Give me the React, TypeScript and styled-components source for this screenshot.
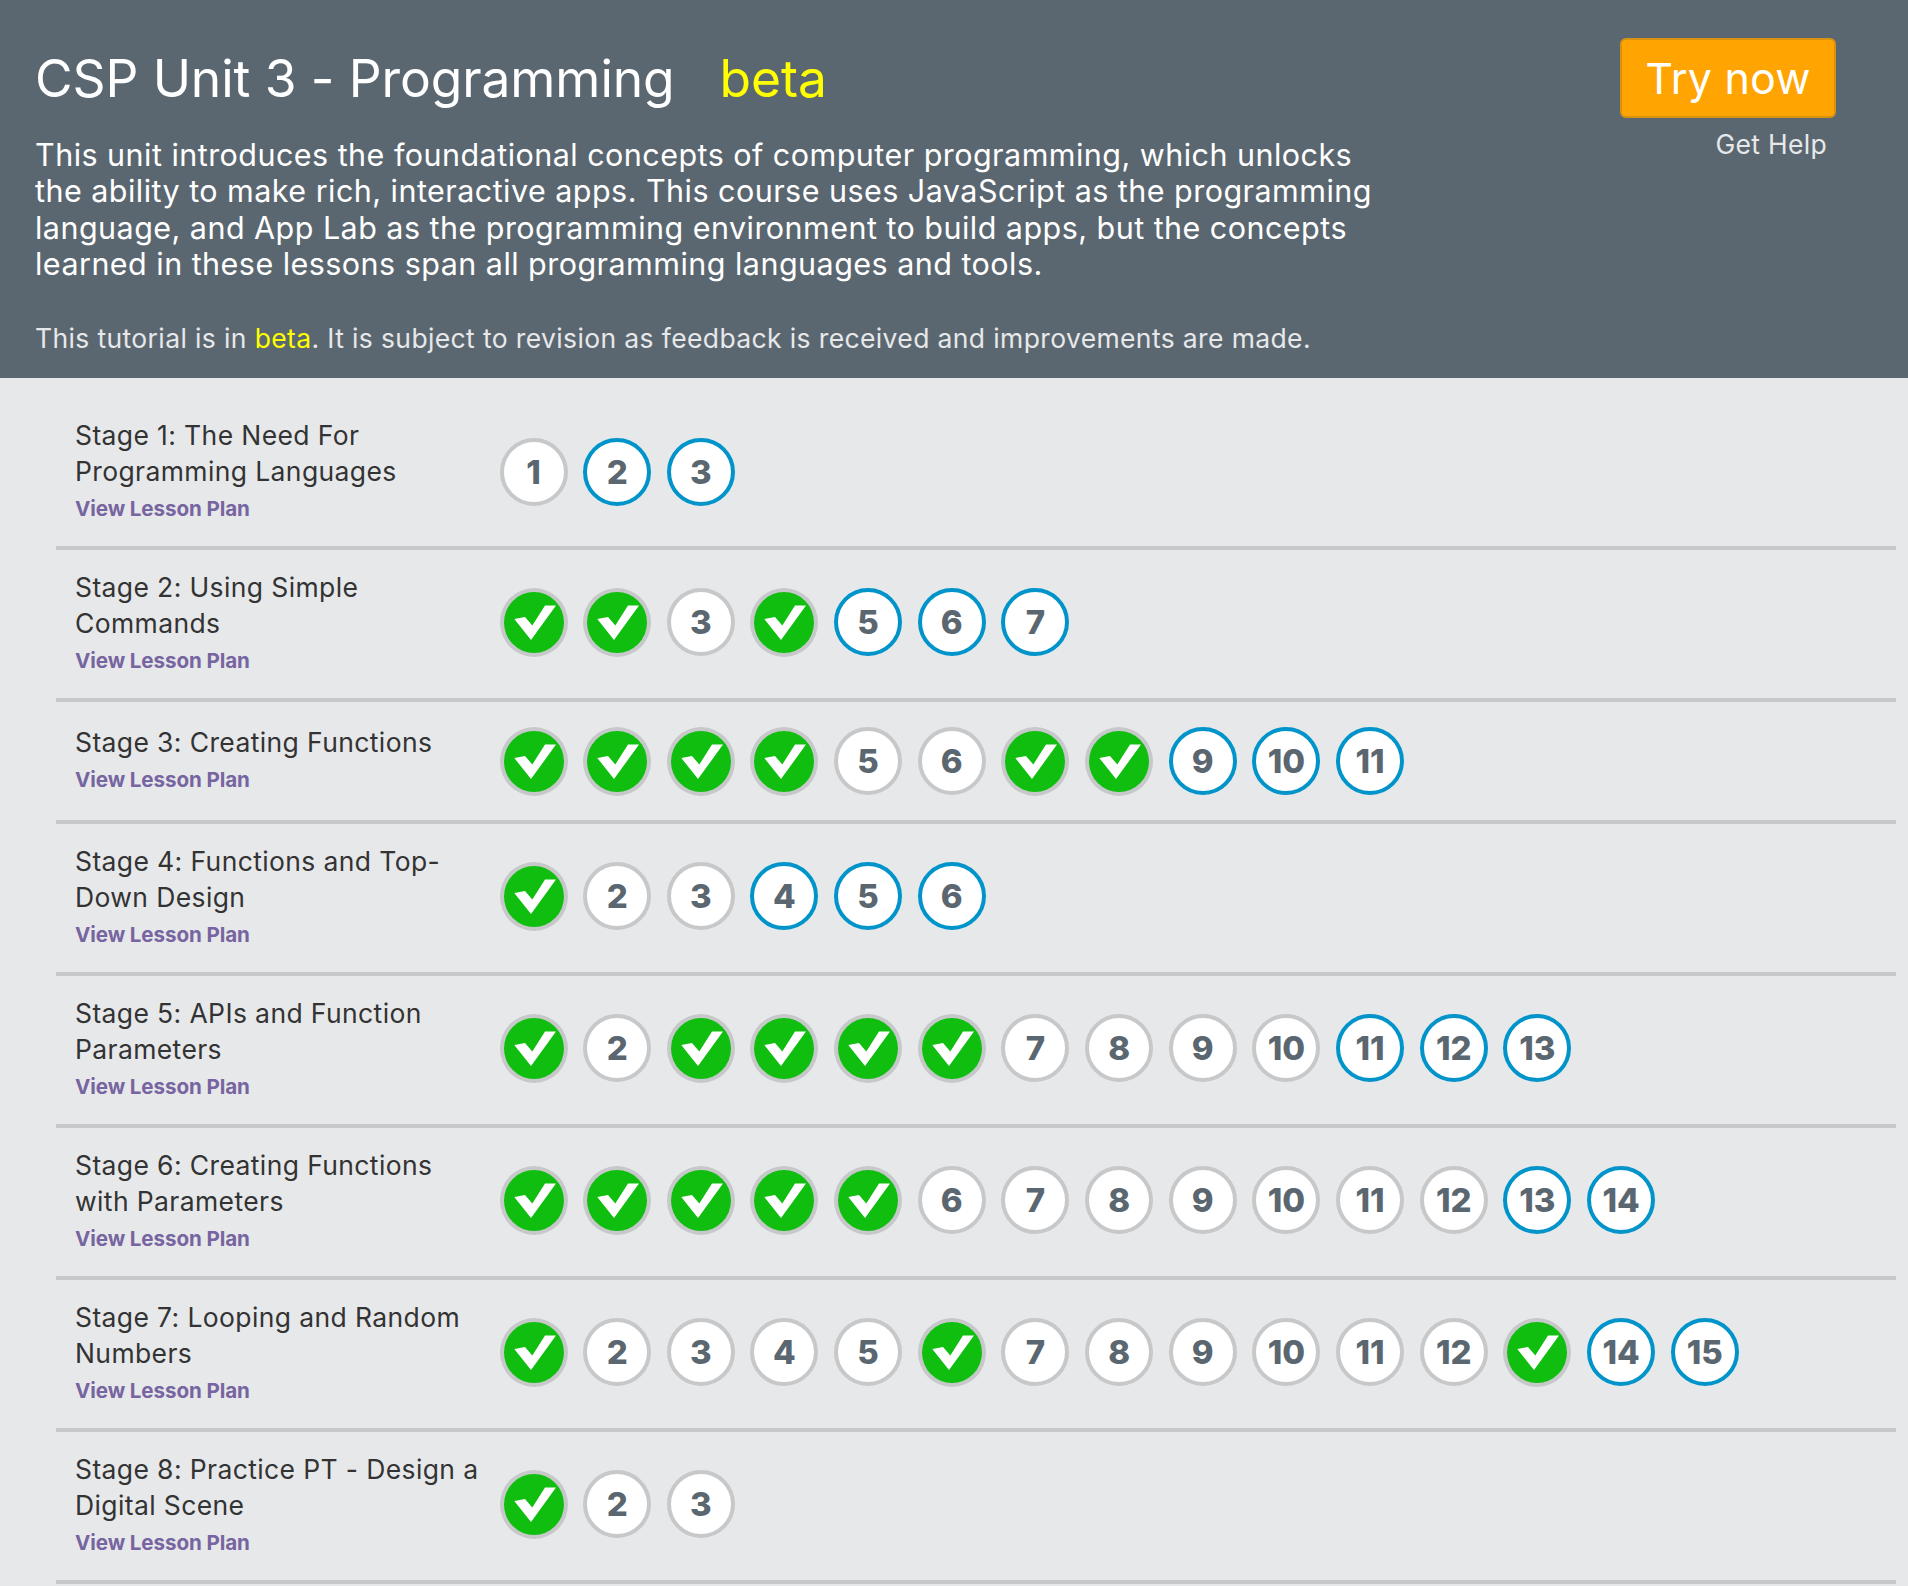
import React from 'react';
import styled, { createGlobalStyle } from 'styled-components';

const Global = createGlobalStyle`
  html, body { margin: 0; padding: 0; background: #e7e8ea; }
  body { font-family: "Inter", "Liberation Sans", sans-serif; }
`;
const Page = styled.div`width: 1908px; height: 1586px; overflow: hidden; background: #e7e8ea;`;
const Header = styled.header`
  height: 378px; box-sizing: border-box; background: #5b6770; color: #fff;
  display: flex; justify-content: space-between; padding: 38px 72px 0 35px;
`;
const Intro = styled.div`width: 1400px;`;
const Title = styled.h1`
  margin: 0; font-size: 51.5px; line-height: 80px; font-weight: 400; display: flex; gap: 45px; letter-spacing: -.1px;
`;
const BetaWord = styled.span`color: #ffff00;`;
const Description = styled.p`
  margin: 19px 0 0; font-size: 30.5px; line-height: 36.3px; font-weight: 400; letter-spacing: .46px; white-space: nowrap;
`;
const Note = styled.p`
  margin: 38px 0 0; font-size: 26.5px; line-height: 36px; font-weight: 400; letter-spacing: .37px; color: #e7e8ea; white-space: nowrap;
`;
const InlineBeta = styled.span`color: #ffff00;`;
const Actions = styled.div`display: flex; flex-direction: column; align-items: flex-end;`;
const TryButton = styled.button`
  width: 216px; height: 80px; box-sizing: border-box; background: #ffa400; border: 2px solid #d9920f; border-radius: 6px;
  color: #fff; font: 400 43px/1 "Inter", sans-serif; letter-spacing: .2px; padding: 0;
`;
const Help = styled.a`
  margin: 8px 9px 0 0; font-size: 26.5px; line-height: 36px; font-weight: 400; letter-spacing: .3px; color: #e7e8ea;
`;
const StageList = styled.main`padding: 20px 12px 0 56px;`;
const Row = styled.section`
  display: flex; align-items: center; box-sizing: border-box; min-height: 122px; border-bottom: 4px solid #c6c8ca;
  padding: 19px 0 21px 19px;
`;
const Info = styled.div`width: 424.5px; flex: none;`;
const StageName = styled.div`font-size: 26.5px; line-height: 36px; font-weight: 400; letter-spacing: .38px; color: #333; white-space: nowrap;`;
const LessonLink = styled.a`display: block; margin-top: 4px; font-size: 20.6px; line-height: 32px; font-weight: 700; letter-spacing: -.1px; color: #7665a0;`;
const Dots = styled.div<{ $drop: boolean }>`
  display: flex; gap: 15.67px; align-items: flex-start;
  margin: ${p => (p.$drop ? '2px 0 0' : '0 0 1px')};
`;
const Dot = styled.div<{ $kind: 'open' | 'next' | 'done' }>`
  width: 68px; height: ${p => (p.$kind === 'done' ? 69 : 68)}px; box-sizing: border-box; border-radius: 50%;
  border: 4px solid ${p => (p.$kind === 'next' ? '#0094ca' : '#c6c8ca')};
  background: ${p => (p.$kind === 'done' ? '#0fbe0f' : '#fff')};
  display: flex; align-items: center; justify-content: center;
  font-size: 33px; font-weight: 800; color: #5b6770;
`;
const Check = styled.svg`width: 60px; height: 61px; flex: none; filter: blur(.6px);`;

type S = 'd' | 'o' | 'n';
const parse = (s: string) => s.split('') as S[];
const stages: { name: string[]; dots: S[] }[] = [
  { name: ['Stage 1: The Need For', 'Programming Languages'], dots: parse('onn') },
  { name: ['Stage 2: Using Simple', 'Commands'], dots: parse('ddodnnn') },
  { name: ['Stage 3: Creating Functions'], dots: parse('ddddooddnnn') },
  { name: ['Stage 4: Functions and Top-', 'Down Design'], dots: parse('doonnn') },
  { name: ['Stage 5: APIs and Function', 'Parameters'], dots: parse('doddddoooonnn') },
  { name: ['Stage 6: Creating Functions', 'with Parameters'], dots: parse('dddddooooooonn') },
  { name: ['Stage 7: Looping and Random', 'Numbers'], dots: parse('doooodoooooodnn') },
  { name: ['Stage 8: Practice PT - Design a', 'Digital Scene'], dots: parse('doo') },
];

const CheckMark = () => (
  <Check viewBox="4 4 60 61">
    <polygon points="14.3,31 25,29 32.3,37.6 45,17.6 56,17.6 31,52" fill="#fff" />
  </Check>
);

export default function App() {
  return (
    <Page>
      <Global />
      <Header>
        <Intro>
          <Title>CSP Unit 3 - Programming <BetaWord>beta</BetaWord></Title>
          <Description>
            This unit introduces the foundational concepts of computer programming, which unlocks<br />
            the ability to make rich, interactive apps. This course uses JavaScript as the programming<br />
            language, and App Lab as the programming environment to build apps, but the concepts<br />
            learned in these lessons span all programming languages and tools.
          </Description>
          <Note>This tutorial is in <InlineBeta>beta</InlineBeta>. It is subject to revision as feedback is received and improvements are made.</Note>
        </Intro>
        <Actions>
          <TryButton>Try now</TryButton>
          <Help>Get Help</Help>
        </Actions>
      </Header>
      <StageList>
        {stages.map(st => (
          <Row key={st.name[0]}>
            <Info>
              <StageName>{st.name.map((l, i) => <div key={i}>{l}</div>)}</StageName>
              <LessonLink>View Lesson Plan</LessonLink>
            </Info>
            <Dots $drop={st.name.length === 1 || !st.dots.includes('d')}>
              {st.dots.map((d, i) => (
                <Dot key={i} $kind={d === 'd' ? 'done' : d === 'n' ? 'next' : 'open'}>
                  {d === 'd' ? <CheckMark /> : i + 1}
                </Dot>
              ))}
            </Dots>
          </Row>
        ))}
      </StageList>
    </Page>
  );
}
